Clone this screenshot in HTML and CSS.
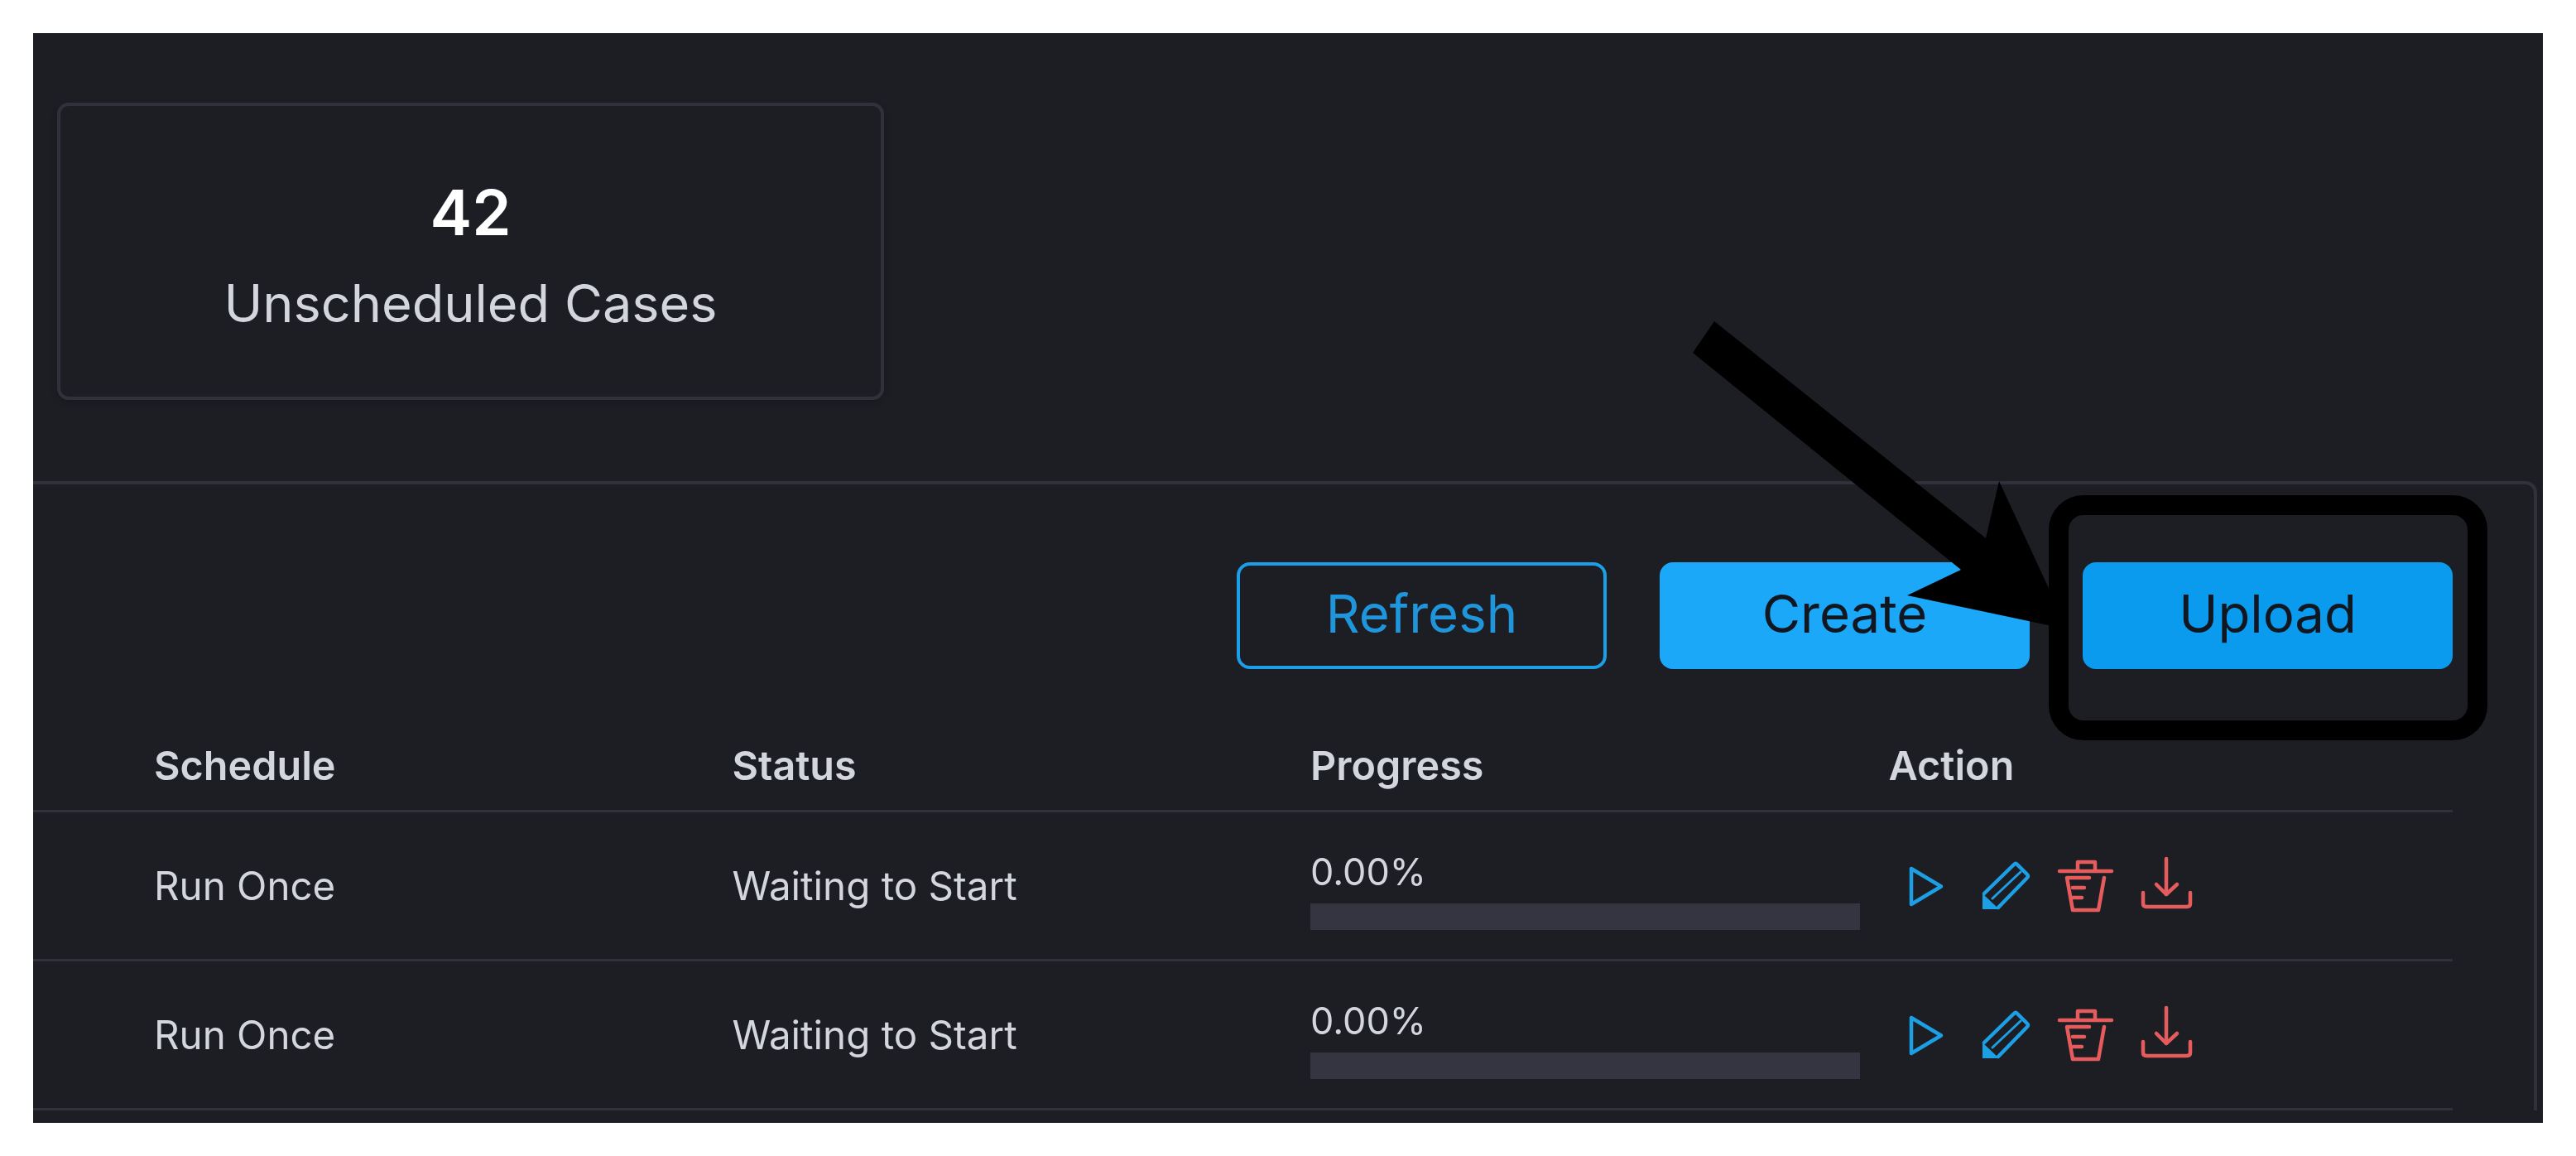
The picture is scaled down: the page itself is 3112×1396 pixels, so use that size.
FILE: index.html
```html
<!DOCTYPE html>
<html lang="en">

<head>
    <meta charset="UTF-8">
    <meta name="viewport" content="width=device-width, initial-scale=1.0">
    <title>Cases</title>
    <link rel="stylesheet" href="styles.css">
</head>

<body>

    <main class="screen">
        <section class="stats">
            <div class="stat-card">
                <div class="stat-value">42</div>
                <div class="stat-label">Unscheduled Cases</div>
            </div>
        </section>

        <section class="panel">
            <div class="toolbar">
                <button class="btn btn-outline" type="button">Refresh</button>
                <button class="btn btn-create" type="button">Create</button>
                <button class="btn btn-upload" type="button">Upload</button>
            </div>

            <div class="row row-head">
                <div>Schedule</div>
                <div>Status</div>
                <div>Progress</div>
                <div>Action</div>
            </div>

            <div class="row">
                <div>Run Once</div>
                <div>Waiting to Start</div>
                <div class="progress">
                    <span class="progress-text">0.00%</span>
                    <div class="progress-bar"></div>
                </div>
                <div class="actions">
                    <svg class="icon icon-blue" viewBox="0 0 72 72"><use href="#i-play"></use></svg>
                    <svg class="icon icon-blue" viewBox="0 0 72 72"><use href="#i-edit"></use></svg>
                    <svg class="icon icon-red" viewBox="0 0 72 72"><use href="#i-trash"></use></svg>
                    <svg class="icon icon-red" viewBox="0 0 72 72"><use href="#i-download"></use></svg>
                </div>
            </div>

            <div class="row">
                <div>Run Once</div>
                <div>Waiting to Start</div>
                <div class="progress">
                    <span class="progress-text">0.00%</span>
                    <div class="progress-bar"></div>
                </div>
                <div class="actions">
                    <svg class="icon icon-blue" viewBox="0 0 72 72"><use href="#i-play"></use></svg>
                    <svg class="icon icon-blue" viewBox="0 0 72 72"><use href="#i-edit"></use></svg>
                    <svg class="icon icon-red" viewBox="0 0 72 72"><use href="#i-trash"></use></svg>
                    <svg class="icon icon-red" viewBox="0 0 72 72"><use href="#i-download"></use></svg>
                </div>
            </div>
        </section>
    </main>

    <!-- annotation drawn on top of the screenshot -->
    <div class="callout-frame"></div>
    <svg class="callout-arrow" viewBox="0 0 3112 1396">
        <polygon points="2071,388 2399,650 2415,581 2498,760 2304,719 2369,688 2045,426"></polygon>
    </svg>

    <svg class="sprites" width="0" height="0">
        <symbol id="i-play" viewBox="0 0 72 72">
            <path d="M19 15V58L55 36.5Z"></path>
        </symbol>
        <symbol id="i-edit" viewBox="0 0 72 72">
            <path d="M10 45L46 10Q48 8 50 10L62 22Q64 24 62 26L27 62"></path>
            <path class="thin" d="M20 51L54 19"></path>
            <path class="solid" d="M8 64V45L28 64Z"></path>
        </symbol>
        <symbol id="i-trash" viewBox="0 0 72 72">
            <path d="M4 18H67"></path>
            <path d="M26 17V7H47V17"></path>
            <path d="M40 26H13L20 65H51L58 26"></path>
            <path d="M20 38H34M20 50H31"></path>
        </symbol>
        <symbol id="i-download" viewBox="0 0 72 72">
            <path d="M36 3V46"></path>
            <path d="M24 34L36 46L49 34"></path>
            <path d="M8 44V57Q8 61 12 61H61Q65 61 65 57V44"></path>
        </symbol>
    </svg>

</body>

</html>
```

FILE: styles.css
```css
body {
    margin: 40px;
    background-color: #fff;
    font-family: Inter, "Liberation Sans", sans-serif;
}

.screen {
    height: 1316px;
    overflow: hidden;
    padding: 84px 7px 0 0;
    box-sizing: border-box;
    background-color: #1d1e23;
    color: #d3d6dc;
    filter: blur(0.7px);
}

.stats {
    display: flex;
    padding-left: 29px;
}

.stat-card {
    width: 999px;
    height: 359px;
    box-sizing: border-box;
    padding-top: 10px;
    border: 4px solid #30313b;
    border-radius: 14px;
    box-shadow: 0 4px 10px rgba(0, 0, 0, 0.15);
    display: flex;
    flex-direction: column;
    align-items: center;
    justify-content: center;
    gap: 30px;
}

.stat-value {
    font-size: 76px;
    line-height: 84px;
    font-weight: 600;
    color: #fff;
}

.stat-label {
    font-size: 63px;
    line-height: 76px;
}

.panel {
    margin-top: 98px;
    padding: 94px 98px 0 0;
    border-top: 4px solid #30313b;
    border-right: 4px solid #30313b;
    border-top-right-radius: 14px;
}

.toolbar {
    display: flex;
    justify-content: flex-end;
    gap: 64px;
}

.btn {
    width: 447px;
    height: 129px;
    padding: 0 0 6px;
    border: 0;
    border-radius: 16px;
    font-family: inherit;
    font-size: 63.5px;
    color: #101720;
}

.btn-outline {
    border: 4px solid #1b9fe8;
    background: transparent;
    color: #1f96dc;
}

.btn-create {
    background-color: #1ca8f8;
}

.btn-upload {
    background-color: #0a9bee;
}

.row {
    display: grid;
    grid-template-columns: 698.5px 698.5px 698.5px 1fr;
    align-items: center;
    height: 180px;
    padding-left: 146px;
    box-sizing: border-box;
    border-bottom: 3px solid #30313b;
    font-size: 47.5px;
}

.row-head {
    height: 173px;
    padding-top: 62px;
    font-size: 48.5px;
    font-weight: 600;
}

.progress {
    display: flex;
    flex-direction: column;
    gap: 11px;
    padding: 10px 35px 0 0;
}

.progress-text {
    font-size: 45px;
    line-height: 54px;
}

.progress-bar {
    height: 32px;
    background-color: #343541;
}

.actions {
    display: flex;
    gap: 25px;
    padding-left: 8px;
}

.icon {
    width: 72px;
    height: 72px;
    fill: none;
    stroke-width: 4.5;
    stroke-linejoin: round;
    stroke-linecap: round;
}

.icon-blue {
    stroke: #1c9fe4;
    color: #1c9fe4;
}

.icon-red {
    stroke: #e65c5c;
    color: #e65c5c;
}

.thin {
    stroke-width: 3;
}

.solid {
    fill: currentColor;
    stroke: none;
}

.sprites {
    position: absolute;
}

.callout-frame {
    position: absolute;
    left: 2475px;
    top: 598px;
    width: 530px;
    height: 296px;
    box-sizing: border-box;
    border: 24px solid #000;
    border-radius: 42px;
}

.callout-arrow {
    position: absolute;
    left: 0;
    top: 0;
    width: 3112px;
    height: 1396px;
    fill: #000;
}
```
